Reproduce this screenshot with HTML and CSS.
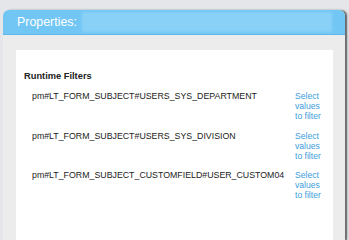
FILE: index.html
```html
<!DOCTYPE html>
<html>
<head>
<meta charset="utf-8">
<link rel="stylesheet" href="styles.css">
</head>
<body>
<div class="panel">
  <div class="panel-header">
    <span class="panel-title">Properties:</span>
    <span class="redacted"></span>
  </div>
  <div class="panel-body">
    <div class="content">
      <div class="section-title">Runtime Filters</div>
      <table class="filters">
        <tr>
          <td class="name">pm#LT_FORM_SUBJECT#USERS_SYS_DEPARTMENT</td>
          <td class="action"><a href="#">Select values to filter</a></td>
        </tr>
        <tr>
          <td class="name">pm#LT_FORM_SUBJECT#USERS_SYS_DIVISION</td>
          <td class="action"><a href="#">Select values to filter</a></td>
        </tr>
        <tr>
          <td class="name">pm#LT_FORM_SUBJECT_CUSTOMFIELD#USER_CUSTOM04</td>
          <td class="action"><a href="#">Select values to filter</a></td>
        </tr>
      </table>
    </div>
  </div>
</div>
</body>
</html>
```

FILE: styles.css
```css
html, body {
  margin: 0;
  padding: 0;
  height: 100%;
  overflow: hidden;
}
body {
  background: #e4e6e9;
  font-family: "Liberation Sans", Arial, sans-serif;
  padding-top: 10px;
  box-sizing: border-box;
}
.panel {
  margin-left: 3px;
  width: 342px;
  height: calc(100vh - 10px);
  border-radius: 6px 6px 0 0;
  box-shadow: 2px 0 1px rgba(0,0,0,0.45), 3px 0 3px rgba(0,0,0,0.15);
  display: flex;
  flex-direction: column;
  background: #ececec;
}
.panel-header {
  height: 24px;
  flex: none;
  background: #72c6f4;
  border-bottom: 1px solid #5cb7ec;
  border-radius: 6px 6px 0 0;
  display: flex;
  align-items: center;
  padding-left: 14px;
  gap: 5px;
}
.panel-title {
  color: #ffffff;
  font-size: 12.4px;
}
.redacted {
  width: 250px;
  height: 20px;
  background: #8ad1f7;
  filter: blur(1.5px);
}
.panel-body {
  flex: 1;
  min-height: 0;
  padding: 15px 12px 0 13px;
}
.content {
  background: #ffffff;
  height: 100%;
  padding: 21px 0 0 8px;
  box-sizing: border-box;
}
.section-title {
  font-weight: bold;
  font-size: 9.3px;
  line-height: 11px;
  color: #222;
}
.filters {
  border-collapse: collapse;
  margin-top: 9px;
}
.filters td {
  padding: 0;
  vertical-align: top;
  font-size: 8.8px;
  line-height: 10px;
}
.filters tr td {
  padding-bottom: 9.5px;
}
.name {
  padding-left: 8px !important;
  width: 263px;
  color: #222;
}
.action {
  width: 30px;
}
.action a {
  color: #3b9ddb;
  text-decoration: none;
  display: block;
  width: 28px;
  font-size: 8.6px;
}
```
